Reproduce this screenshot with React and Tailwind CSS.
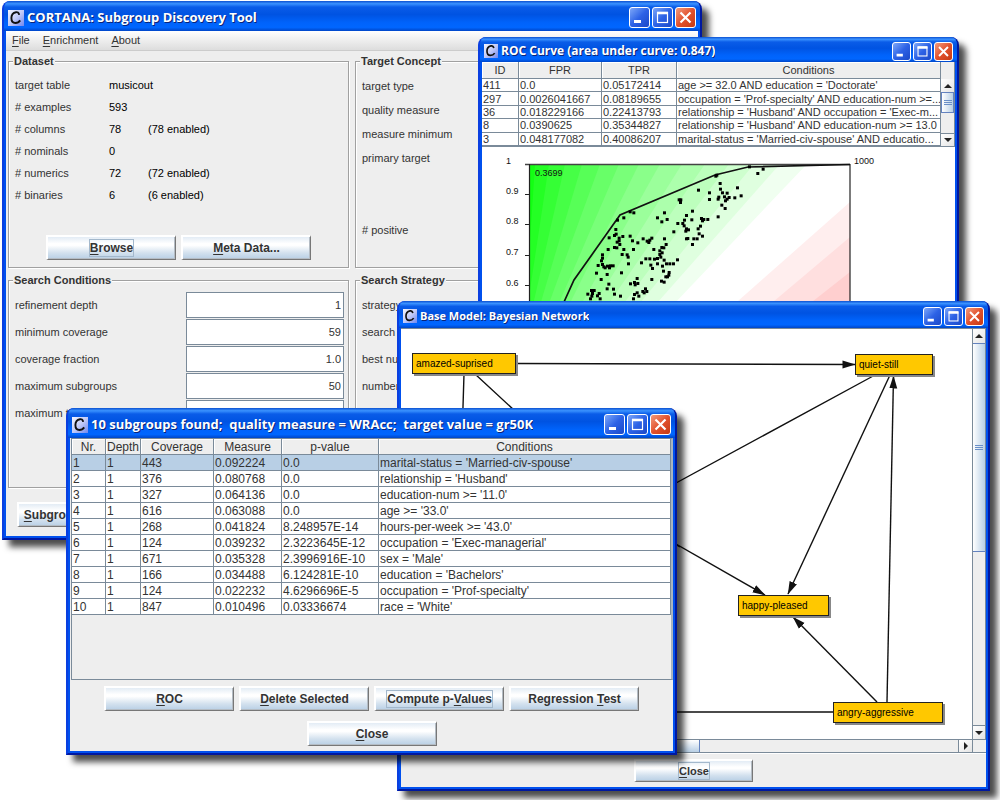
import React from "react";

const DOTS = [
  [272, 208], [273, 222], [252, 233], [268, 226], [282, 234], [293, 229], [282, 242], [284, 253], [276, 246],
  [315, 228], [322, 242], [338, 248], [354, 236], [366, 243], [374, 240], [380, 234], [371, 247], [249, 268],
  [268, 262], [275, 263], [296, 268], [325, 268], [291, 283], [306, 284], [309, 291], [310, 311], [232, 284],
  [232, 294], [229, 302], [232, 313], [219, 316], [236, 320], [247, 318], [256, 317], [264, 317], [253, 323],
  [240, 323], [214, 339], [246, 343], [289, 338], [228, 358], [251, 372], [246, 386], [265, 387], [268, 402],
  [286, 408], [188, 402], [199, 391], [207, 391], [202, 400], [200, 408], [196, 416], [222, 400], [217, 407],
  [225, 416], [316, 371], [328, 367], [336, 355], [330, 374], [338, 370], [336, 398], [328, 403], [341, 408],
  [325, 416], [353, 394], [361, 386], [365, 394], [357, 398], [380, 358], [409, 363], [417, 366], [422, 350],
  [431, 345], [427, 350], [415, 333], [432, 337], [382, 325], [377, 315], [397, 311], [412, 318], [424, 311],
  [434, 311], [445, 311], [457, 299], [417, 300], [397, 295], [388, 297], [374, 296], [362, 296], [349, 308],
  [404, 283], [407, 291], [404, 272], [410, 262], [416, 263], [423, 253], [411, 278], [386, 268], [418, 236],
  [446, 215], [458, 190], [473, 190], [478, 180], [484, 166], [477, 197], [484, 206], [482, 213], [490, 209],
  [484, 236], [488, 235], [502, 253], [506, 236], [516, 236], [532, 228], [522, 221], [519, 206], [526, 198],
  [500, 179], [529, 175], [536, 178], [548, 178], [532, 182], [502, 153], [426, 178], [410, 185], [397, 173],
  [418, 158], [326, 158], [315, 155], [296, 173], [520, 90], [553, 98], [553, 118], [585, 70], [586, 87],
  [581, 111], [579, 117], [592, 98], [598, 110], [606, 99], [601, 122], [606, 117], [612, 112], [590, 135],
  [600, 145], [579, 170], [629, 113], [637, 83], [648, 107], [462, 119], [467, 119], [466, 127], [572, 48],
  [575, 45], [277, 180], [698, 40], [714, 27], [673, 20],
];

const GREEN_EDGES = [278, 251, 225, 200, 176, 153, 131, 110, 90, 71, 53, 36, 20, 6];

const SUBGROUPS = [
  ["1", "1", "443", "0.092224", "0.0", "marital-status = 'Married-civ-spouse'"],
  ["2", "1", "376", "0.080768", "0.0", "relationship = 'Husband'"],
  ["3", "1", "327", "0.064136", "0.0", "education-num >= '11.0'"],
  ["4", "1", "616", "0.063088", "0.0", "age >= '33.0'"],
  ["5", "1", "268", "0.041824", "8.248957E-14", "hours-per-week >= '43.0'"],
  ["6", "1", "124", "0.039232", "2.3223645E-12", "occupation = 'Exec-managerial'"],
  ["7", "1", "671", "0.035328", "2.3996916E-10", "sex = 'Male'"],
  ["8", "1", "166", "0.034488", "6.124281E-10", "education = 'Bachelors'"],
  ["9", "1", "124", "0.022232", "4.6296696E-5", "occupation = 'Prof-specialty'"],
  ["10", "1", "847", "0.010496", "0.03336674", "race = 'White'"],
];

const ROC_ROWS = [
  ["411", "0.0", "0.05172414", "age >= 32.0 AND education = 'Doctorate'"],
  ["297", "0.0026041667", "0.08189655", "occupation = 'Prof-specialty' AND education-num >=..."],
  ["36", "0.018229166", "0.22413793", "relationship = 'Husband' AND occupation = 'Exec-m..."],
  ["8", "0.0390625", "0.35344827", "relationship = 'Husband' AND education-num >= 13.0"],
  ["3", "0.048177082", "0.40086207", "marital-status = 'Married-civ-spouse' AND educatio..."],
];

function AppIcon({ large }) {
  return (
    <svg viewBox="0 0 16 16" className={large ? "size-4 shrink-0" : "size-[14px] shrink-0"} aria-hidden="true">
      <defs>
        <linearGradient id="app-icon" x1="0" y1="0" x2="1" y2="1">
          <stop offset="0" stopColor="#f4f6ff" />
          <stop offset="0.5" stopColor="#c3cbf8" />
          <stop offset="1" stopColor="#6f86ee" />
        </linearGradient>
      </defs>
      <rect width="16" height="16" fill="url(#app-icon)" />
      <path
        d="M11.200 4.800C10.800 2.600 9.400 1.900 8 2.200C5.400 2.700 3.400 5 3.400 8C3.400 11 5 13 7.400 13C9.400 13 11 12.200 12.200 10.400"
        fill="none"
        stroke="#111"
        strokeWidth="1.900"
      />
    </svg>
  );
}

function CaptionButton({ kind, large }) {
  const size = large ? "size-[21px]" : "size-[19px]";
  const color =
    kind === "Close"
      ? "bg-linear-to-br from-[#f09a7c] via-[#e2512c] to-[#c63a12]"
      : "bg-linear-to-br from-[#7ea6f8] via-[#2d62e6] to-[#1b49c8]";
  return (
    <button type="button" aria-label={kind} className={`${size} ${color} shrink-0 rounded-[3px] border border-white`}>
      <svg viewBox="0 0 19 19" className="size-full" fill="none" stroke="#fff" aria-hidden="true">
        {kind === "Minimize" && <path d="M4 13.500H11" strokeWidth="3" />}
        {kind === "Maximize" && (
          <>
            <rect x="4.500" y="4.500" width="10" height="10" strokeWidth="1.200" />
            <path d="M4 5H15" strokeWidth="2.600" />
          </>
        )}
        {kind === "Close" && <path d="M4.500 4.500L14.500 14.500M14.500 4.500L4.500 14.500" strokeWidth="2.200" />}
      </svg>
    </button>
  );
}

function Window({ title, place, titleClass, large, children }) {
  return (
    <section
      aria-label={title}
      className={`absolute flex flex-col overflow-hidden rounded-t-lg border-2 border-t-0 border-l-[#0a3fe0] border-r-[#0018a0] border-b-[#0018a0] bg-[#0050ee] shadow-[7px_7px_6px_rgba(0,0,0,0.7)] ${place}`}
    >
      <header
        className={`flex shrink-0 items-center justify-between bg-[linear-gradient(180deg,#0c50d0_0%,#3a92ff_9%,#0a5ce8_20%,#0053e2_45%,#0063fb_72%,#0066ff_88%,#0046c8_100%)] pt-[3px] pr-1 pl-1 ${titleClass}`}
      >
        <div className="flex min-w-0 items-center gap-[3px]">
          <AppIcon large={large} />
          <h2 className="truncate font-['Open_Sans','Noto_Sans',sans-serif] font-bold whitespace-pre text-white [text-shadow:1px_1px_0_#0a2478]">
            {title}
          </h2>
        </div>
        <div className="flex gap-[2px]">
          <CaptionButton kind="Minimize" large={large} />
          <CaptionButton kind="Maximize" large={large} />
          <CaptionButton kind="Close" large={large} />
        </div>
      </header>
      <div className="mx-[2px] mb-[2px] flex min-h-0 flex-1 flex-col bg-[#eeeeee]">{children}</div>
    </section>
  );
}

function MetalButton({ before = "", hot, after = "", focused, size = "h-[25px] w-[130px] text-[12px]" }) {
  return (
    <button
      type="button"
      className={`flex shrink-0 items-center justify-center border-t-2 border-r border-b border-l-2 border-t-white border-r-[#777] border-b-[#777] border-l-white bg-[linear-gradient(180deg,#e3ecf5_0%,#ffffff_30%,#ffffff_38%,#d3e1ee_72%,#b8cfe5_100%)] font-bold whitespace-nowrap text-[#333] shadow-[inset_-1px_-1px_0_#b4bcc4] ${size}`}
    >
      <span className={focused ? "leading-4 outline outline-[#a3b8cc]" : "leading-4"}>
        {before}
        <span className="underline underline-offset-2">{hot}</span>
        {after}
      </span>
    </button>
  );
}

function Group({ title, className = "", children }) {
  return (
    <fieldset
      className={`min-w-0 border border-[#a0a0a0] pl-[6px] shadow-[1px_1px_0_#fff,inset_1px_1px_0_#fff] ${className}`}
    >
      <legend className="-ml-[2px] bg-[#eeeeee] px-px text-[11px] leading-[14px] font-bold">{title}</legend>
      {children}
    </fieldset>
  );
}

function MainWindow() {
  const facts = [
    ["target table", "musicout", ""],
    ["# examples", "593", ""],
    ["# columns", "78", "(78 enabled)"],
    ["# nominals", "0", ""],
    ["# numerics", "72", "(72 enabled)"],
    ["# binaries", "6", "(6 enabled)"],
  ];
  const fields = [
    ["refinement depth", "1"],
    ["minimum coverage", "59"],
    ["coverage fraction", "1.0"],
    ["maximum subgroups", "50"],
    ["maximum time", ""],
  ];
  return (
    <Window
      title="CORTANA: Subgroup Discovery Tool"
      place="top-px left-[2px] h-[539px] w-[700px]"
      titleClass="h-[30px] text-[13px]"
      large
    >
      <nav className="flex h-5 shrink-0 items-center gap-[13px] border-b border-[#cccccc] bg-linear-to-b from-white to-[#dddddd] px-[6px] text-[11px]">
        {["File", "Enrichment", "About"].map((m) => (
          <button key={m} type="button">
            <span className="underline underline-offset-2">{m[0]}</span>
            {m.slice(1)}
          </button>
        ))}
      </nav>
      <div className="grid grid-cols-2 gap-x-[6px] gap-y-[5px] px-[2px] pt-[3px] text-[11px]">
        <Group title="Dataset" className="h-[214px]">
          <dl className="pt-[6px]">
            {facts.map(([k, v, e]) => (
              <div key={k} className="grid h-[22px] grid-cols-[94px_39px_1fr] items-center">
                <dt>{k}</dt>
                <dd className="whitespace-nowrap text-black">{v}</dd>
                <dd className="text-black">{e}</dd>
              </div>
            ))}
          </dl>
          <div className="flex justify-center gap-[5px] pt-[29px] pr-[6px]">
            <MetalButton hot="B" after="rowse" focused />
            <MetalButton hot="M" after="eta Data..." />
          </div>
        </Group>
        <Group title="Target Concept" className="h-[214px]">
          <ul className="pt-[6px]">
            {["target type", "quality measure", "measure minimum", "primary target"].map((t) => (
              <li key={t} className="flex h-6 items-center">
                {t}
              </li>
            ))}
            <li className="mt-12 flex h-6 items-center"># positive</li>
          </ul>
        </Group>
        <Group title="Search Conditions" className="h-[215px]">
          <div className="flex flex-col gap-px pt-[5px] pr-1">
            {fields.map(([name, value]) => {
              const id = name.replace(" ", "-");
              return (
                <div key={name} className="flex items-center justify-between">
                  <label htmlFor={id}>{name}</label>
                  <input
                    id={id}
                    defaultValue={value}
                    className="h-[26px] w-[158px] border border-[#7a8a99] bg-white px-[2px] text-right"
                  />
                </div>
              );
            })}
          </div>
        </Group>
        <Group title="Search Strategy" className="h-[215px]">
          <ul className="pt-[5px]">
            {["strategy", "search width", "best number", "number of bins"].map((t) => (
              <li key={t} className="flex h-[27px] items-center">
                {t}
              </li>
            ))}
          </ul>
        </Group>
      </div>
      <div className="flex pt-[14px] pl-[11px]">
        <MetalButton hot="S" after="ubgroup Discovery" />
      </div>
    </Window>
  );
}

function ArrowButton({ dir, className }) {
  const d = { up: "M0 5H8L4 1Z", down: "M0 1H8L4 5Z", right: "M2 -1V7L6 3Z" }[dir];
  return (
    <button
      type="button"
      aria-label={`Scroll ${dir}`}
      className={`flex shrink-0 items-center justify-center bg-linear-to-br from-white to-[#e4e4e4] ${className}`}
    >
      <svg viewBox="0 -1 8 8" className="size-2" fill="#222" aria-hidden="true">
        <path d={d} />
      </svg>
    </button>
  );
}

function Grip() {
  return (
    <div className="flex flex-col gap-px">
      <div className="h-px w-2 bg-[#6a8fc8]" />
      <div className="h-px w-2 bg-[#6a8fc8]" />
      <div className="h-px w-2 bg-[#6a8fc8]" />
    </div>
  );
}

const headCell =
  "overflow-hidden border-r border-b border-[#7a8a99] bg-[#eeeeee] px-0 pb-0 text-center font-normal whitespace-nowrap shadow-[inset_1px_1px_0_#fff]";
const bodyCell = "overflow-hidden whitespace-nowrap border-r border-b border-[#7a8a99] pb-0 pr-0 pl-px";

function RocChart() {
  const green = GREEN_EDGES.map((t, i) => {
    const drop = 160 * 0.95 * Math.pow(t / 278, 0.7);
    const c = 240 - 17 * i;
    return (
      <path
        key={t}
        d={`M0 0H${t}L${(t - drop).toFixed(1)} 160H-200V0Z`}
        fill={`rgb(${c},255,${c})`}
      />
    );
  });
  return (
    <svg viewBox="0 0 473 170" className="h-[170px] w-[473px] shrink-0 font-['Liberation_Sans',sans-serif]" role="img" aria-label="ROC curve">
      <defs>
        <clipPath id="plot-area">
          <rect width="321" height="160" />
        </clipPath>
      </defs>
      <g transform="translate(47 17)">
        <g clipPath="url(#plot-area)">
          {green}
          <path d="M321 38L183 160H321Z" fill="#ffeeee" />
          <path d="M321 73L218 160H321Z" fill="#ffdfdf" />
          <path d="M321 108L255 160H321Z" fill="#ffcfcf" />
        </g>
        <path d="M-4 0.500H321" stroke="#444" strokeWidth="1.400" fill="none" />
        <path d="M0.500 0V160M321 0V160" stroke="#222" strokeWidth="1.200" fill="none" />
        <path d="M-4 30.500H0M-4 60.500H0M-4 91.500H0M-4 121.500H0" stroke="#222" fill="none" />
        <path d="M26 160L35 138L45 116L91 51L186 11L219 3L321 0.500" stroke="#111" strokeWidth="1.700" fill="none" />
        <g transform="translate(-4 -4) scale(0.3333)" fill="#000">
          {DOTS.map(([x, y]) => (
            <rect key={`${x}-${y}`} x={x - 4} y={y - 4} width="9" height="9" />
          ))}
        </g>
      </g>
      <g fontSize="9" fill="#111">
        <text x="24" y="17">1</text>
        <text x="24" y="47">0.9</text>
        <text x="24" y="77">0.8</text>
        <text x="24" y="108">0.7</text>
        <text x="24" y="139">0.6</text>
        <text x="53" y="29">0.3699</text>
        <text x="372" y="17">1000</text>
      </g>
    </svg>
  );
}

function RocWindow() {
  return (
    <Window
      title="ROC Curve (area under curve: 0.847)"
      place="top-[37px] left-[478px] h-[290px] w-[481px]"
      titleClass="h-[25px] text-[12px]"
    >
      <div className="flex shrink-0 border-b border-[#7a8a99]">
        <div className="min-w-0 flex-1">
          <table className="h-[84px] w-full table-fixed border-separate border-spacing-0 bg-white text-[11px] leading-[12px] text-[#333]">
            <thead>
              <tr className="h-[17px]">
                <th className={`w-[37px] pt-0 ${headCell}`}>ID</th>
                <th className={`w-[83px] pt-0 ${headCell}`}>FPR</th>
                <th className={`w-[75px] pt-0 ${headCell}`}>TPR</th>
                <th className={`pt-0 ${headCell}`}>Conditions</th>
              </tr>
            </thead>
            <tbody>
              {ROC_ROWS.map((r) => (
                <tr key={r[0]}>
                  {r.map((c, i) => (
                    <td key={i} className={`pt-0 ${bodyCell}`}>
                      {c}
                    </td>
                  ))}
                </tr>
              ))}
            </tbody>
          </table>
        </div>
        <div className="flex w-[14px] shrink-0 flex-col border-r border-[#7a8a99] bg-[#eeeeee] pt-[17px]">
          <ArrowButton dir="up" className="h-[13px]" />
          <div className="flex h-[21px] items-center justify-center border border-[#6382bf] bg-linear-to-r from-white to-[#b8cfe5]">
            <Grip />
          </div>
          <div className="flex-1" />
          <ArrowButton dir="down" className="h-[13px] border-t border-[#7a8a99]" />
        </div>
      </div>
      <div className="flex-1 overflow-hidden bg-white">
        <RocChart />
      </div>
    </Window>
  );
}

function Node({ className, children }) {
  return (
    <div
      className={`absolute flex h-[21px] items-center border border-[#222] bg-[#ffc800] pl-[3px] text-[10px] text-black shadow-[2px_2px_0_#888] ${className}`}
    >
      {children}
    </div>
  );
}

function BayesWindow() {
  return (
    <Window
      title="Base Model: Bayesian Network"
      place="top-[301px] left-[397px] h-[490px] w-[593px]"
      titleClass="h-[27px] text-[11px]"
    >
      <div className="flex min-h-0 flex-1 border-t border-[#7a8a99]">
        <div className="relative min-w-0 flex-1 overflow-hidden bg-white">
          <svg viewBox="0 0 570 411" className="h-[411px] w-[570px]" stroke="#111" strokeWidth="1.400" role="img" aria-label="Network edges">
            <defs>
              <marker id="arrow" markerUnits="userSpaceOnUse" markerWidth="14" markerHeight="10" refX="12.500" refY="4.500" orient="auto">
                <path d="M0 0.500L13 4.500L0 8.500Z" fill="#111" stroke="none" />
              </marker>
            </defs>
            <path d="M63 45L61 110M74 45L140 106M474 46L240 173M249 200L279 218M432 383H240" fill="none" />
            <path d="M115 34.500L454 35.500" fill="none" markerEnd="url(#arrow)" />
            <path d="M240 195L364 266" fill="none" markerEnd="url(#arrow)" />
            <path d="M489 46L387 265" fill="none" markerEnd="url(#arrow)" />
            <path d="M486 373L492.500 47" fill="none" markerEnd="url(#arrow)" />
            <path d="M476 373L392 288" fill="none" markerEnd="url(#arrow)" />
          </svg>
          <Node className="top-6 left-[11px] w-[104px]">amazed-suprised</Node>
          <Node className="top-[25px] left-[454px] w-[78px]">quiet-still</Node>
          <Node className="top-[266px] left-[337px] w-[91px]">happy-pleased</Node>
          <Node className="top-[373px] left-[432px] w-[110px]">angry-aggressive</Node>
        </div>
        <div className="flex w-[14px] shrink-0 flex-col border-x border-[#7a8a99] bg-[#eeeeee]">
          <ArrowButton dir="up" className="h-[14px]" />
          <div className="flex h-[209px] items-center justify-center border-y border-[#6382bf] bg-linear-to-r from-white to-[#b8cfe5]">
            <Grip />
          </div>
          <div className="flex-1" />
          <ArrowButton dir="down" className="h-[14px] border-t border-[#7a8a99]" />
        </div>
      </div>
      <div className="flex h-[14px] shrink-0 border-y border-[#7a8a99]">
        <div className="w-[299px] border-r border-[#6382bf] bg-linear-to-b from-white to-[#b8cfe5]" />
        <div className="flex-1" />
        <ArrowButton dir="right" className="w-[15px] border-x border-[#7a8a99]" />
        <div className="w-[13px]" />
      </div>
      <div className="flex h-[34px] shrink-0 items-center justify-center border-t border-white">
        <MetalButton hot="C" after="lose" focused size="h-[23px] w-[119px] text-[11px]" />
      </div>
    </Window>
  );
}

function SubgroupsWindow() {
  return (
    <Window
      title="10 subgroups found;  quality measure = WRAcc;  target value = gr50K"
      place="top-[408px] left-[66px] h-[347px] w-[611px]"
      titleClass="h-[30px] text-[13px]"
      large
    >
      <div className="ml-px flex-1 border border-r-2 border-[#7a8a99] border-r-[#a8b4c0]">
        <table className="w-full table-fixed border-separate border-spacing-0 bg-white text-[12px] leading-[13px] text-[#333]">
          <thead>
            <tr>
              <th className={`w-[34px] pt-[2px] ${headCell}`}>Nr.</th>
              <th className={`w-[35px] pt-[2px] ${headCell}`}>Depth</th>
              <th className={`w-[73px] pt-[2px] ${headCell}`}>Coverage</th>
              <th className={`w-[68px] pt-[2px] ${headCell}`}>Measure</th>
              <th className={`w-[97px] pt-[2px] ${headCell}`}>p-value</th>
              <th className={`pt-[2px] ${headCell}`}>Conditions</th>
            </tr>
          </thead>
          <tbody>
            {SUBGROUPS.map((r, n) => (
              <tr key={r[0]} className={n === 0 ? "bg-[#b8cfe5]" : "bg-white"}>
                {r.map((c, i) => (
                  <td key={i} className={`pt-[2px] ${bodyCell}`}>
                    {c}
                  </td>
                ))}
              </tr>
            ))}
          </tbody>
        </table>
      </div>
      <div className="flex shrink-0 justify-center gap-[5px] pt-[6px]">
        <MetalButton hot="R" after="OC" />
        <MetalButton hot="D" after="elete Selected" />
        <MetalButton before="Compute p-" hot="V" after="alues" focused />
        <MetalButton before="Regression " hot="T" after="est" />
      </div>
      <div className="flex shrink-0 justify-center pt-[10px] pb-[5px]">
        <MetalButton hot="C" after="lose" />
      </div>
    </Window>
  );
}

export default function App() {
  return (
    <main className="relative min-h-screen overflow-hidden bg-white font-['Liberation_Sans',sans-serif] text-[#333]">
      <MainWindow />
      <RocWindow />
      <BayesWindow />
      <SubgroupsWindow />
    </main>
  );
}
